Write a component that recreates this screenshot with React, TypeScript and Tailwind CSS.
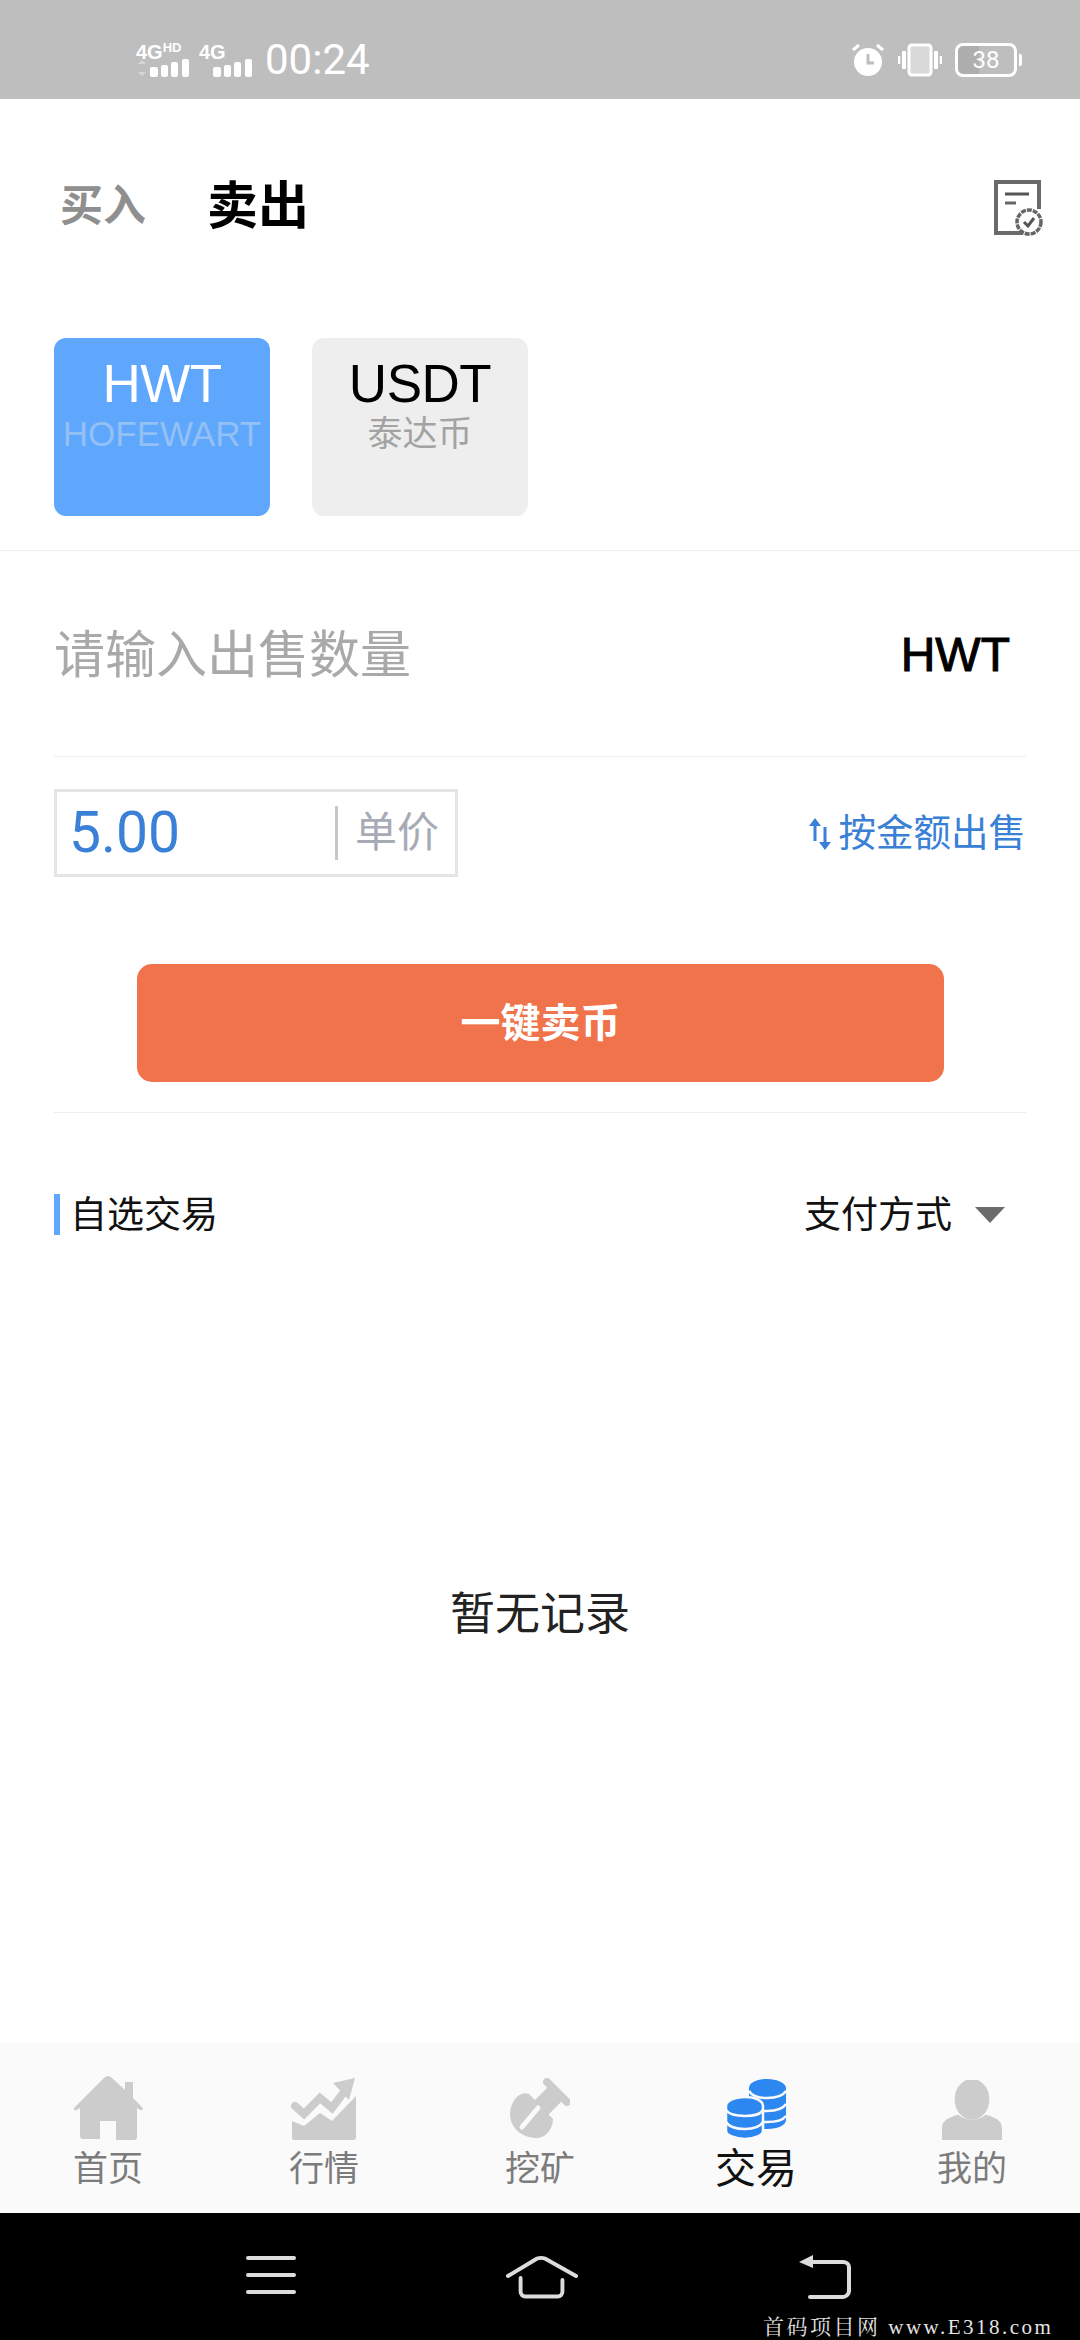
import type { ReactNode } from 'react'

const CJK = "font-['Liberation_Sans','Noto_Sans_CJK_SC',sans-serif]"

function Signal({ label, hd, arrows }: { label: string; hd?: boolean; arrows?: boolean }) {
  return (
    <div className="flex flex-col w-[54px] text-white">
      <div className="flex items-start h-[17px] leading-none font-bold text-[20px] font-['Liberation_Sans',sans-serif]">
        <span className="ml-[1px]">{label}</span>
        {hd && <span className="text-[13px] mt-[-1px]">HD</span>}
      </div>
      <svg width="54" height="18" viewBox="0 0 54 18">
        {arrows && <path d="M7 1l4 4H3zM7 17l4-4H3z" fill="#d6d6d6" />}
        <rect x="15" y="8" width="8" height="10" rx="2" fill="#fff" />
        <rect x="26" y="6" width="7" height="12" rx="2" fill="#fff" />
        <rect x="36" y="3" width="7" height="15" rx="2" fill="#fff" />
        <rect x="47" y="0" width="7" height="18" rx="2" fill="#fff" />
      </svg>
    </div>
  )
}

function StatusBar() {
  return (
    <div className="h-[99px] shrink-0 bg-[#bebebe] flex items-center pl-[135px] pr-[58px] pt-[20px] text-white">
      <Signal label="4G" hd arrows />
      <div className="w-[9px]" />
      <Signal label="4G" />
      <span className="ml-[13px] text-[42px] leading-none font-['Roboto',sans-serif] mt-[1px]">00:24</span>
      <div className="flex-1" />
      <svg width="34" height="34" viewBox="0 0 34 34" fill="none">
        <circle cx="17" cy="19" r="14" fill="#fff" />
        <path d="M17 11v9h6" stroke="#bebebe" strokeWidth="3" />
        <path d="M2 7l6-5M32 7l-6-5" stroke="#fff" strokeWidth="3" />
      </svg>
      <svg width="44" height="34" viewBox="0 0 44 34" className="ml-[13px]" fill="none">
        <rect x="11" y="2" width="22" height="30" rx="3" fill="#d9d9d9" stroke="#fff" strokeWidth="3" />
        <path d="M6 8v18M38 8v18" stroke="#fff" strokeWidth="4" />
        <path d="M1 13v8M43 13v8" stroke="#fff" strokeWidth="2.5" />
      </svg>
      <div className="ml-[13px] w-[62px] h-[34px] border-[3px] border-white rounded-[8px] flex items-center justify-center text-[24px] leading-none font-['Roboto',sans-serif] bg-[linear-gradient(90deg,#aeaeae_38%,#bebebe_38%)]">
        38
      </div>
      <div className="ml-[2px] w-[3px] h-[12px] bg-white rounded-r-[2px]" />
    </div>
  )
}

function RecordIcon() {
  return (
    <svg width="50" height="58" viewBox="0 0 50 58" fill="none">
      <path d="M30 54H3V3h43v27" stroke="#6a6a6a" strokeWidth="4" />
      <path d="M12 15h24" stroke="#555" strokeWidth="3" />
      <path d="M12 24h11" stroke="#666" strokeWidth="3" />
      <circle cx="36" cy="43" r="12" fill="#fff" stroke="#666" strokeWidth="3.5" strokeDasharray="5 1" />
      <path d="M31 43l4 4 6-8" stroke="#555" strokeWidth="3" />
    </svg>
  )
}

function CoinCard({ title, sub, active }: { title: string; sub: string; active?: boolean }) {
  return (
    <div className={`w-[216px] h-[178px] rounded-[12px] flex flex-col items-center pt-[16px] ${active ? 'bg-[#5ea7fd]' : 'bg-[#eeeeee]'}`}>
      <span className={`text-[53px] leading-[60px] tracking-[-0.5px] ${active ? 'text-white' : 'text-black'}`}>{title}</span>
      <span className={`text-[35px] leading-[40px] ${active ? 'text-[#93c0f5]' : 'text-[#a3a3a3]'}`}>{sub}</span>
    </div>
  )
}

function HomeIcon() {
  return (
    <svg width="70" height="64" viewBox="0 0 70 64" fill="#cccccc">
      <path d="M35 0c2 0 3 1 4 2l13 12V6h8v16l9 9c2 2 0 4-2 3l-3-2v29c0 2-1 3-3 3H43V45H27v18H10c-2 0-3-1-3-3V32l-3 2c-3 1-4-1-2-3L31 2c1-1 2-2 4-2z" />
    </svg>
  )
}

function ChartIcon() {
  return (
    <svg width="66" height="64" viewBox="0 0 66 64" fill="#cccccc">
      <path d="M4 30l9 8 16-16 12 10 15-20" fill="none" stroke="#cccccc" strokeWidth="8" strokeLinecap="round" />
      <path d="M42 7l22-5-6 22z" />
      <path d="M1 45l12 5 16-13 12 8 24-25v41c0 2-1 3-3 3H3c-2 0-2-1-2-3z" />
    </svg>
  )
}

function MineIcon() {
  return (
    <svg width="60" height="62" viewBox="0 0 60 62" fill="#cccccc">
      <path d="M37 4l20 20" stroke="#cccccc" strokeWidth="8" strokeLinecap="round" />
      <path d="M47 14L28 33" stroke="#cccccc" strokeWidth="20" />
      <path d="M19 16l24 25c0 9-7 19-16 19C12 60 0 50 0 36 0 26 8 12 19 16z" />
      <path d="M12 49l16-19" stroke="#fafafa" strokeWidth="5" strokeLinecap="round" />
    </svg>
  )
}

function CoinsIcon() {
  return (
    <svg width="61" height="61" viewBox="0 0 61 61" fill="#2d87f0">
      <path d="M23 9c0-5 8-9 18-9s19 4 19 9v32c0 5-8 9-19 9s-18-4-18-9z" />
      <path d="M23 12c3 5 10 7 18 7s16-2 19-7M23 25c3 5 10 7 18 7s16-2 19-7M23 37c3 4 10 6 18 6s16-2 19-6" fill="none" stroke="#fafafa" strokeWidth="2.500" />
      <path d="M0 27c0-5 8-9 19-9s18 4 18 9v25c0 4-8 8-18 8S0 56 0 52z" stroke="#fafafa" strokeWidth="2.500" />
      <path d="M0 31c3 5 10 6 19 6s15-1 18-6M0 43c3 5 10 7 19 7s15-2 18-7" fill="none" stroke="#fafafa" strokeWidth="2.500" />
    </svg>
  )
}

function UserIcon() {
  return (
    <svg width="62" height="60" viewBox="0 0 62 62" fill="#cccccc">
      <ellipse cx="31" cy="20" rx="18" ry="21" />
      <path d="M0 62V50c0-8 6-11 17-14 3 3 8 5 14 5s11-2 14-5c11 3 17 6 17 14v12z" />
    </svg>
  )
}

function NavItem({ icon, label, active }: { icon: ReactNode; label: string; active?: boolean }) {
  return (
    <div className="w-[216px] flex flex-col items-center">
      <div className="h-[70px] flex items-end justify-center">{icon}</div>
      <span className={active ? 'mt-[7px] text-[41px] leading-[44px] text-[#111]' : 'mt-[9px] text-[35px] leading-[40px] text-[#7c7c7c]'}>{label}</span>
    </div>
  )
}

export default function App() {
  return (
    <div className={`relative w-[1080px] h-[2340px] overflow-hidden flex flex-col bg-white ${CJK}`}>
      <StatusBar />

      {/* buy / sell tabs */}
      <div className="h-[217px] shrink-0 flex items-center pl-[60px] pr-[37px]">
        <span className="text-[43px] font-bold text-[#8f8f8f] mt-[-2px]">买入</span>
        <span className="ml-[61px] text-[51px] font-bold text-black mt-[-1px]">卖出</span>
        <div className="flex-1" />
        <RecordIcon />
      </div>

      <div className="flex gap-[42px] px-[54px] pt-[22px]">
        <CoinCard title="HWT" sub="HOFEWART" active />
        <CoinCard title="USDT" sub="泰达币" />
      </div>
      <div className="h-[1px] mt-[34px] bg-[#eeeeee]" />

      {/* amount */}
      <div className="mx-[54px] h-[206px] border-b border-[#eeeeee] flex items-center justify-between pr-[16px]">
        <span className="text-[51px] text-[#a9a9a9] mt-[5px]">请输入出售数量</span>
        <span className="text-[48px] text-black mt-[3px] [-webkit-text-stroke:1px_black]">HWT</span>
      </div>

      <div className="mx-[54px] mt-[32px] flex items-center justify-between">
        <div className="w-[404px] h-[88px] border-[3px] border-[#e4e5e7] flex items-center pl-[12px]">
          <span className="w-[266px] text-[57px] leading-none text-[#3980d6] font-['Roboto',sans-serif] mt-[-2px]">5.00</span>
          <div className="w-[3px] h-[54px] bg-[#c6c8cc]" />
          <span className="ml-[17px] text-[42px] leading-none text-[#a6abb5]">单价</span>
        </div>
        <div className="flex items-center text-[#3980d6] mt-[2px]">
          <svg width="24" height="34" viewBox="0 0 24 34" fill="#3980d6" className="mr-[7px]">
            <path d="M5.500 8h3v16h-3zM7 1l6 8H1z" />
            <path d="M15.500 10h3v16h-3zM17 33l-6-8h12z" />
          </svg>
          <span className="text-[37.500px] leading-none">按金额出售</span>
        </div>
      </div>

      <button className="mt-[87px] ml-[137px] w-[807px] h-[118px] rounded-[15px] bg-[#f0734b] text-white text-[40px] font-bold flex items-center justify-center">
        一键卖币
      </button>
      <div className="mx-[54px] mt-[30px] h-[1px] bg-[#eeeeee]" />

      {/* list header */}
      <div className="mx-[54px] mt-[81px] h-[41px] flex items-center justify-between">
        <div className="h-full border-l-[6px] border-[#5ea7fd] pl-[10px] flex items-center text-[37px] text-[#111]">
          <span className="mt-[2px]">自选交易</span>
        </div>
        <div className="flex items-center text-[37px] text-[#111] pr-[21px]">
          <span className="mt-[2px]">支付方式</span>
          <svg width="30" height="16" viewBox="0 0 30 16" className="ml-[23px]">
            <path d="M0 0h30L15 16z" fill="#6b6b6b" />
          </svg>
        </div>
      </div>

      <div className="flex-1 flex items-center justify-center pb-[48px]">
        <span className="text-[45px] text-[#222]">暂无记录</span>
      </div>

      {/* tab bar */}
      <div className="h-[171px] shrink-0 bg-[#fafafa] flex pt-[28px]">
        <NavItem icon={<HomeIcon />} label="首页" />
        <NavItem icon={<ChartIcon />} label="行情" />
        <NavItem icon={<MineIcon />} label="挖矿" />
        <NavItem icon={<CoinsIcon />} label="交易" active />
        <NavItem icon={<UserIcon />} label="我的" />
      </div>

      {/* android nav */}
      <div className="h-[127px] shrink-0 bg-black flex items-start pt-[42px] pl-[246px]">
        <svg width="50" height="40" viewBox="0 0 50 40" stroke="#dcdcdc" strokeWidth="4" strokeLinecap="round" className="shrink-0">
          <path d="M2 3h46M2 20h46M2 37h46" />
        </svg>
        <svg width="72" height="44" viewBox="0 0 74 44" fill="none" stroke="#dcdcdc" strokeWidth="4" strokeLinecap="round" strokeLinejoin="round" className="ml-[210px] shrink-0">
          <path d="M2 21L32 3c3-1 5-1 8 0l32 18" />
          <path d="M15 23v14c0 3 2 5 5 5h33c3 0 5-2 5-5V25" />
        </svg>
        <svg width="52" height="44" viewBox="0 0 52 44" fill="none" className="ml-[221px] shrink-0">
          <path d="M14 0v13L0 7z" fill="#dcdcdc" />
          <path d="M12 7h32c3 0 6 2 6 5v24c0 3-3 6-6 6H11" stroke="#dcdcdc" strokeWidth="4" strokeLinecap="round" />
        </svg>
      </div>

      {/* watermark burned into the screenshot */}
      <div className="absolute left-[763px] top-[2314px] whitespace-nowrap text-[21px] leading-[26px] tracking-[2.500px] text-[#e4e4e4] font-['Liberation_Serif','Noto_Serif_CJK_SC','Noto_Sans_CJK_SC',serif]">
        首码项目网 www.E318.com
      </div>
    </div>
  )
}
